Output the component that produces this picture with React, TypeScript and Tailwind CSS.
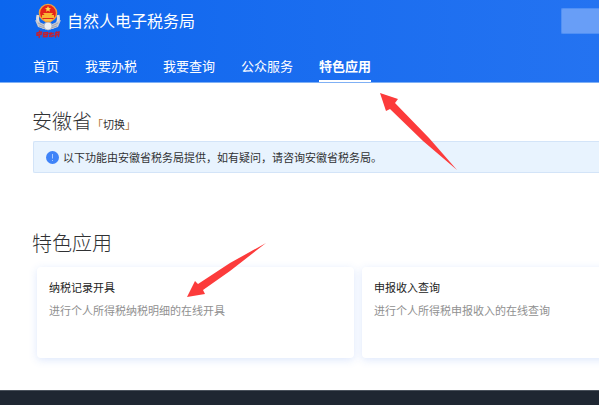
const navItems = ["首页", "我要办税", "我要查询", "公众服务", "特色应用"];

const apps = [
  { title: "纳税记录开具", desc: "进行个人所得税纳税明细的在线开具" },
  { title: "申报收入查询", desc: "进行个人所得税申报收入的在线查询" },
];

function Emblem() {
  return (
    <svg width="28" height="36" viewBox="0 0 28 36" aria-hidden="true">
      <path
        d="M4 12C2 20 7 25 14 25S26 20 24 12"
        fill="none"
        stroke="#d9dbe0"
        strokeWidth="3"
      />
      <path d="M1 17l4 2 5 2 2 3-2 2-6-2zM27 17l-4 2-5 2-2 3 2 2 6-2z" fill="#c6c8cf" />
      <path d="M4 20l6 3M24 20l-6 3M5 23l6 2M23 23l-6 2" stroke="#8d96aa" strokeWidth="0.7" />
      <circle cx="14" cy="23" r="4" fill="#eceef1" stroke="#a4a9b5" strokeWidth="0.7" />
      <circle cx="14" cy="10" r="8.6" fill="#e3231b" stroke="#f2a03a" strokeWidth="1.4" />
      <path
        d="M14 3l.9 2 2.100.2-1.600 1.400.5 2.100-1.900-1.100-1.900 1.100.5-2.100L11 5.200l2.100-.2z"
        fill="#ffd84a"
      />
      <path d="M9 10h10l-1.500 2H20v3H8v-3h2.500z" fill="#f9b532" />
      <path d="M9 16h10l-2 2h-6z" fill="#f6c043" />
      <g fill="none" stroke="#c4202f" strokeWidth="1.400" strokeLinecap="round">
        <path d="M3 30l4.500-.8-.5 2.300-4 .6zM5.500 28l-.3 6.500" />
        <path d="M9.500 30l4-.5-.5 4-3.500.2zM10.500 31.800h2" />
        <path d="M15 30.500l2-.5-1.500 3.500M17.500 31l2-.8M17 33.500l3-1" />
        <path d="M21.500 30l3.500-1-.5 4.500M21.500 32l3.500-.6M22.500 29l-1 5" />
      </g>
    </svg>
  );
}

function Header() {
  return (
    <header className="border-b border-[#7fb0f5] bg-linear-to-r from-[#0b66ee] to-[#2473f1] text-white">
      <div className="flex h-[52px] items-start">
        <a href="#home" className="ml-[34px] flex items-center gap-[5px] pt-[3px]">
          <Emblem />
          <span className="mb-[2px] text-base leading-6">自然人电子税务局</span>
        </a>
        <button
          aria-label="账户"
          className="mt-2 ml-auto h-[26px] w-[38px] rounded-l-xs border border-r-0 border-[#5090f5] bg-[#689ef7]"
        />
      </div>
      <nav className="flex gap-[26px] pl-[33px] text-[13px]">
        {navItems.map((item, i) => (
          <a
            key={item}
            href={"#nav-" + i}
            className={
              i === 4
                ? "h-[30px] border-b-2 border-white leading-7 font-bold"
                : "h-[30px] leading-7"
            }
          >
            {item}
          </a>
        ))}
      </nav>
    </header>
  );
}

export default function App() {
  return (
    <div className="relative overflow-hidden bg-white font-['Noto_Sans_CJK_SC','Liberation_Sans',sans-serif] text-[#303133]">
      <Header />
      <main className="pb-8 pl-8">
        <div className="flex items-baseline pt-6">
          <h1 className="text-xl leading-7 font-light">安徽省</h1>
          <button className="flex text-[11px]">
            <span className="text-[#b07030]">「</span>切换
            <span className="text-[#b07030]">」</span>
          </button>
        </div>
        <div className="mt-[6px] ml-px flex h-8 items-center gap-1 rounded-l-xs border border-r-0 border-[#d3e4f8] bg-[#e8f3fe] pl-3 text-[11px]">
          <svg width="13" height="13" viewBox="0 0 13 13" aria-hidden="true">
            <circle cx="6.500" cy="6.500" r="6.500" fill="#3f83f8" />
            <path d="M6.500 3v4.500M6.500 9v1" stroke="#a9c9ff" strokeWidth="1" />
          </svg>
          <p>以下功能由安徽省税务局提供，如有疑问，请咨询安徽省税务局。</p>
        </div>
        <h2 className="mt-[56px] text-xl leading-7 font-light">特色应用</h2>
        <div className="mt-[10px] ml-[5px] flex gap-2">
          {apps.map((app) => (
            <a
              key={app.title}
              href={"#" + app.title}
              className="h-[91px] w-[317px] shrink-0 rounded-sm bg-white px-3 pt-[10px] text-[11px] shadow-[0_2px_8px_rgba(64,120,240,0.18)]"
            >
              <h3 className="leading-5 text-[#222222]">{app.title}</h3>
              <p className="mt-[3px] leading-5 text-[#909090]">{app.desc}</p>
            </a>
          ))}
        </div>
      </main>
      <footer className="h-4 border-t border-[#4a525c] bg-[#1f2732]" />
      <svg
        className="pointer-events-none absolute top-[92px] left-[379px]"
        width="80"
        height="80"
        viewBox="0 0 80 80"
        aria-hidden="true"
      >
        <path d="M1 1L19 7 16 11 50 46 78 78 44 49 11 17 7 19Z" fill="#fc3b3b" />
      </svg>
      <svg
        className="pointer-events-none absolute top-[243px] left-[187px]"
        width="80"
        height="55"
        viewBox="0 0 80 55"
        aria-hidden="true"
      >
        <path d="M0 54L8 38 11 41 43 20 79 0 43 28 16 47 18 51Z" fill="#fc3b3b" />
      </svg>
    </div>
  );
}
